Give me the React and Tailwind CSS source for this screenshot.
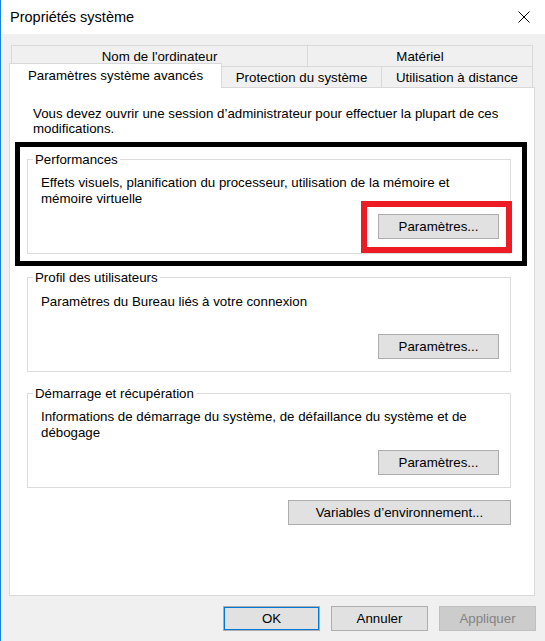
import React from 'react';

const Btn = ({ children, className = '' }) => (
  <button
    type="button"
    className={`h-[25px] border border-[#adadad] bg-[#e1e1e1] text-[13.3px] leading-[15px] text-black ${className}`}
  >
    {children}
  </button>
);

const Group = ({ title, children, className = '' }) => (
  <fieldset className={`ml-[17px] w-[484px] border border-[#dcdcdc] p-0 ${className}`}>
    <legend className="ml-[5px] px-[2px] text-[13.3px] leading-[15px]">{title}</legend>
    {children}
  </fieldset>
);

const App = () => {
  return (
    <div className="relative h-[641px] w-[545px] overflow-hidden border-l border-[#1883d7] bg-[#f0f0f0] font-['Liberation_Sans',Arial,sans-serif] text-black">
      {/* title bar */}
      <div className="flex h-[34px] items-center justify-between bg-white pl-[9px] pr-[15px]">
        <span className="text-[14.5px] leading-[18px]">Propriétés système</span>
        <svg width="12" height="12" viewBox="0 0 12 12" className="block">
          <path d="M0.5 0.5 L11.5 11.5 M11.5 0.5 L0.5 11.5" stroke="#000" strokeWidth="1" fill="none" />
        </svg>
      </div>

      {/* tabs */}
      <div className="ml-[10px] mt-[11px] flex h-[21px] text-[13.3px] leading-[15px]">
        <div className="flex w-[297px] items-center justify-center border-l border-r border-t border-[#d9d9d9]">
          Nom de l'ordinateur
        </div>
        <div className="flex w-[225px] items-center justify-center border-r border-t border-[#d9d9d9]">
          Matériel
        </div>
      </div>
      <div className="ml-[8px] flex h-[21px] text-[13.3px] leading-[15px]">
        <div className="relative z-10 -mt-[3px] flex h-[25px] w-[213px] items-center justify-center border-l border-r border-t border-[#d9d9d9] bg-white pb-[1px]">
          Paramètres système avancés
        </div>
        <div className="flex w-[160px] items-center justify-center border-r border-t border-[#d9d9d9]">
          Protection du système
        </div>
        <div className="flex w-[151px] items-center justify-center border-r border-t border-[#d9d9d9]">
          Utilisation à distance
        </div>
      </div>

      {/* panel */}
      <div className="ml-[8px] h-[509px] w-[526px] border border-[#d9d9d9] bg-white">
        <p className="pl-[23px] pt-[18px] text-[13.3px] leading-[15px]">
          Vous devez ouvrir une session d’administrateur pour effectuer la plupart de ces
          <br />
          modifications.
        </p>

        <Group title="Performances" className="mt-[16px]">
          <div className="pb-[14px] pl-[13px] pr-[11px] pt-[8px]">
            <p className="text-[13.3px] leading-[16px]">
              Effets visuels, planification du processeur, utilisation de la mémoire et
              <br />
              mémoire virtuelle
            </p>
            <div className="mt-[7px] flex justify-end">
              <Btn className="w-[121px]">Paramètres...</Btn>
            </div>
          </div>
        </Group>

        <Group title="Profil des utilisateurs" className="mt-[16px]">
          <div className="pb-[12px] pl-[13px] pr-[11px] pt-[9px]">
            <p className="text-[13.3px] leading-[16px]">Paramètres du Bureau liés à votre connexion</p>
            <div className="mt-[24px] flex justify-end">
              <Btn className="w-[121px]">Paramètres...</Btn>
            </div>
          </div>
        </Group>

        <Group title="Démarrage et récupération" className="mt-[14px]">
          <div className="pb-[12px] pl-[13px] pr-[11px] pt-[8px]">
            <p className="text-[13.3px] leading-[16px]">
              Informations de démarrage du système, de défaillance du système et de
              <br />
              débogage
            </p>
            <div className="mt-[9px] flex justify-end">
              <Btn className="w-[121px]">Paramètres...</Btn>
            </div>
          </div>
        </Group>

        <div className="ml-[17px] mt-[12px] flex w-[484px] justify-end">
          <Btn className="w-[223px]">Variables d’environnement...</Btn>
        </div>
      </div>

      {/* dialog buttons */}
      <div className="mt-[10px] flex justify-end gap-[11px] pr-[9px]">
        <Btn className="w-[97px] border-[#0078d7] shadow-[inset_0_0_0_1px_#0078d7]">OK</Btn>
        <Btn className="w-[97px]">Annuler</Btn>
        <button
          type="button"
          className="h-[25px] w-[97px] border border-[#bfbfbf] bg-[#cccccc] text-[13.3px] leading-[15px] text-[#838383]"
        >
          Appliquer
        </button>
      </div>

      {/* annotation frames */}
      <div className="pointer-events-none absolute left-[14px] top-[142px] h-[124px] w-[512px] border-[5px] border-black" />
      <div className="pointer-events-none absolute left-[360px] top-[201px] h-[52px] w-[151px] border-[6px] border-[#ed1c24]" />
    </div>
  );
};

export default App;
